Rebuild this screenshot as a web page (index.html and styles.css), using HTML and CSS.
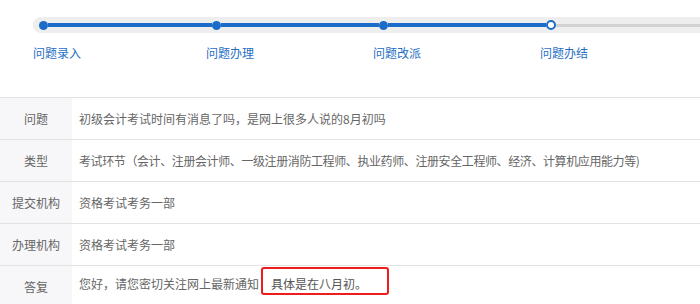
FILE: index.html
```html
<!DOCTYPE html>
<html lang="zh-CN">
<head>
<meta charset="UTF-8">
<title>问题详情</title>
<link rel="stylesheet" href="styles.css">
</head>
<body>

<div class="steps">
  <div class="step first">
    <div class="bar"><span class="seg none"></span><span class="dot"></span><span class="seg"></span></div>
    <div class="label">问题录入</div>
  </div>
  <div class="step">
    <div class="bar"><span class="seg"></span><span class="dot"></span><span class="seg"></span></div>
    <div class="label">问题办理</div>
  </div>
  <div class="step">
    <div class="bar"><span class="seg"></span><span class="dot"></span><span class="seg"></span></div>
    <div class="label">问题改派</div>
  </div>
  <div class="step">
    <div class="bar"><span class="seg"></span><span class="dot current"></span><span class="seg todo"></span></div>
    <div class="label">问题办结</div>
  </div>
</div>

<table class="detail">
  <tr>
    <th>问题</th>
    <td>初级会计考试时间有消息了吗，是网上很多人说的8月初吗</td>
  </tr>
  <tr>
    <th>类型</th>
    <td class="tight">考试环节（会计、注册会计师、一级注册消防工程师、执业药师、注册安全工程师、经济、计算机应用能力等)</td>
  </tr>
  <tr>
    <th>提交机构</th>
    <td>资格考试考务一部</td>
  </tr>
  <tr>
    <th>办理机构</th>
    <td>资格考试考务一部</td>
  </tr>
  <tr class="reply">
    <th>答复</th>
    <td>您好，请您密切关注网上最新通知<span class="mark">具体是在八月初。</span></td>
  </tr>
</table>

</body>
</html>
```

FILE: styles.css
```css
/* page */
body {
  margin: 0;
  font-family: "Microsoft YaHei", "Noto Sans CJK SC", sans-serif;
  font-size: 12px;
  color: #666;
  background: #fff;
}

/* progress steps */
.steps {
  display: grid;
  grid-template-columns: 173px 167px 167px 1fr;
  margin: 17px 0 0 33px;
}

.bar {
  display: flex;
  align-items: center;
  height: 16px;
  background: #eee;
}

.first .bar {
  border-radius: 8px 0 0 8px;
}

.seg {
  height: 4px;
  background: #1b6cc8;
}

.seg:first-child {
  width: 6px;
}

.seg:last-child {
  flex: 1;
}

.seg.none {
  background: transparent;
}

.seg.todo {
  height: 3px;
  background: #d2d2d2;
}

.dot {
  width: 9px;
  height: 9px;
  border-radius: 50%;
  background: #1b6cc8;
  flex-shrink: 0;
}

.dot.current {
  box-sizing: border-box;
  width: 10px;
  height: 10px;
  background: #fff;
  border: 2px solid #1b6cc8;
}

.label {
  margin-top: 12px;
  line-height: 16px;
  color: #1f6fc5;
}

/* detail table */
.detail {
  width: 100%;
  margin-top: 36px;
  border-collapse: collapse;
}

.detail tr {
  border-top: 1px solid #e2e2e2;
}

.detail th,
.detail td {
  height: 41px;
  padding: 0;
  font-weight: normal;
  text-align: left;
  vertical-align: middle;
}

.detail th {
  width: 72px;
  text-align: center;
  background: #f7f7f9;
}

.detail td {
  padding-left: 7px;
}

.detail td.tight {
  letter-spacing: -0.4px;
}

.reply th {
  vertical-align: top;
  padding-top: 12px;
  line-height: 18px;
}

.reply td {
  vertical-align: top;
  padding-top: 1px;
}

.mark {
  display: inline-block;
  margin-left: 2px;
  padding: 6px 8px 0;
  line-height: 18px;
  border: 2px solid #ee1c1c;
  border-radius: 3px;
  width: 108px;
  color: #555;
}
```
